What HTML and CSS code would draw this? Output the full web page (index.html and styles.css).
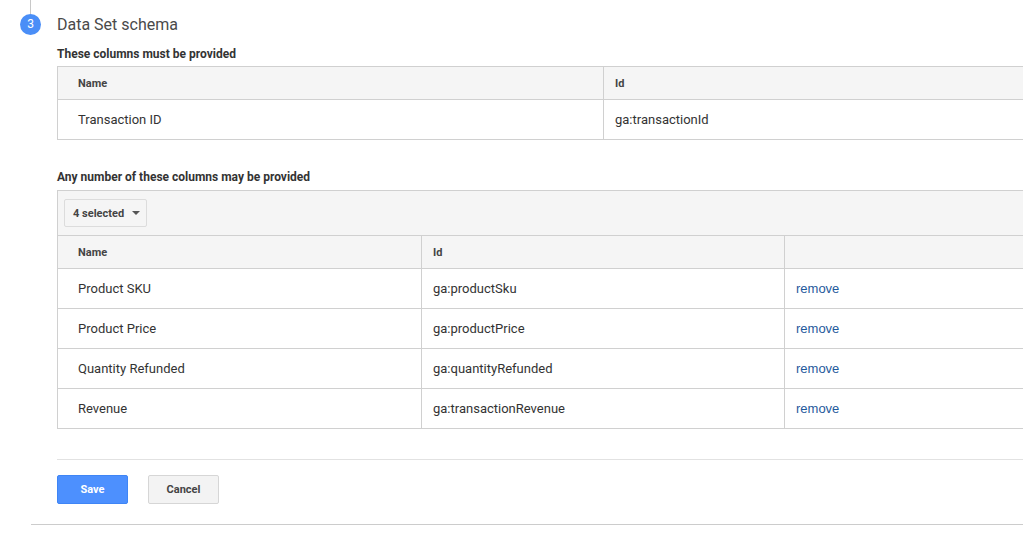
FILE: index.html
```html
<!DOCTYPE html>
<html>
<head>
<meta charset="utf-8">
<link rel="stylesheet" href="styles.css">
</head>
<body>
<div class="page">
  <div class="rail-line"></div>
  <div class="step-head">
    <span class="step-badge">3</span>
    <span class="step-title">Data Set schema</span>
  </div>
  <div class="step-body">
    <div class="label label-first">These columns must be provided</div>
    <table class="grid grid-two">
      <colgroup><col class="col-half"><col class="col-half"></colgroup>
      <thead>
        <tr class="head-row"><th>Name</th><th>Id</th></tr>
      </thead>
      <tbody>
        <tr class="data-row"><td>Transaction ID</td><td>ga:transactionId</td></tr>
      </tbody>
    </table>

    <div class="label label-second">Any number of these columns may be provided</div>
    <table class="grid grid-three">
      <colgroup><col class="col-third"><col class="col-third2"><col class="col-third"></colgroup>
      <thead>
        <tr class="tool-row">
          <th colspan="3">
            <button class="select-btn">4 selected <span class="caret"></span></button>
          </th>
        </tr>
        <tr class="head-row"><th>Name</th><th>Id</th><th></th></tr>
      </thead>
      <tbody>
        <tr class="data-row"><td>Product SKU</td><td>ga:productSku</td><td><a class="link">remove</a></td></tr>
        <tr class="data-row"><td>Product Price</td><td>ga:productPrice</td><td><a class="link">remove</a></td></tr>
        <tr class="data-row"><td>Quantity Refunded</td><td>ga:quantityRefunded</td><td><a class="link">remove</a></td></tr>
        <tr class="data-row"><td>Revenue</td><td>ga:transactionRevenue</td><td><a class="link">remove</a></td></tr>
      </tbody>
    </table>

    <div class="divider"></div>
    <div class="actions">
      <button class="btn btn-primary">Save</button>
      <button class="btn btn-default">Cancel</button>
    </div>
  </div>
  <div class="bottom-line"></div>
</div>
</body>
</html>
```

FILE: styles.css
```css
html, body {
  margin: 0;
  padding: 0;
  background: #ffffff;
  overflow: hidden;
}
body {
  width: 1023px;
  height: 539px;
  font-family: Roboto, "Liberation Sans", Arial, sans-serif;
  font-size: 13px;
  color: #333333;
}
.page {
  width: 1200px;
}
.rail-line {
  margin-left: 30px;
  width: 1px;
  height: 14px;
  background: #c8c8c8;
}
.step-head {
  display: flex;
  align-items: center;
  height: 21px;
}
.step-badge {
  margin-left: 20px;
  width: 21px;
  height: 21px;
  border-radius: 50%;
  background: #4a8ef7;
  color: #ffffff;
  font-size: 12px;
  line-height: 21px;
  text-align: center;
}
.step-title {
  margin-left: 16px;
  font-size: 16px;
  color: #4a4a4a;
}
.step-body {
  margin-left: 57px;
}
.label {
  height: 16px;
  line-height: 16px;
  font-size: 12px;
  font-weight: bold;
  color: #333333;
}
.label-first {
  margin-top: 11px;
  margin-bottom: 4px;
}
.label-second {
  margin-top: 29px;
  margin-bottom: 5px;
}
.grid {
  width: 1092px;
  border-collapse: collapse;
  table-layout: fixed;
}
.col-half {
  width: 546px;
}
.col-third {
  width: 364px;
}
.col-third2 {
  width: 363px;
}
.grid th, .grid td {
  border: 1px solid #d0d0d0;
  text-align: left;
  padding: 0 0 0 11px;
  vertical-align: middle;
}
.grid th:first-child, .grid td:first-child {
  padding-left: 20px;
}
.head-row {
  height: 33px;
}
.head-row th {
  background: #f5f5f5;
  font-size: 11px;
  font-weight: bold;
  color: #444444;
}
.data-row {
  height: 40px;
}
.data-row td {
  font-size: 13px;
  color: #333333;
}
.tool-row {
  height: 45px;
}
.grid .tool-row th {
  background: #f5f5f5;
  padding-left: 6px;
  border-bottom: 1px solid #d0d0d0;
}
.select-btn {
  display: inline-flex;
  align-items: center;
  height: 28px;
  width: 83px;
  padding: 0 0 0 8px;
  border: 1px solid #dcdcdc;
  border-radius: 2px;
  background: #f5f5f5;
  font-family: Roboto, "Liberation Sans", Arial, sans-serif;
  font-size: 11px;
  font-weight: bold;
  color: #444444;
}
.caret {
  margin-left: 8px;
  width: 0;
  height: 0;
  border-left: 4px solid transparent;
  border-right: 4px solid transparent;
  border-top: 4px solid #555555;
}
.link {
  font-family: "Liberation Sans", Arial, sans-serif;
  color: #1f5a9c;
  font-size: 13px;
  text-decoration: none;
}
.divider {
  margin-top: 30px;
  height: 1px;
  background: #e2e2e2;
}
.actions {
  display: flex;
  gap: 20px;
  margin-top: 15px;
}
.btn {
  width: 71px;
  height: 29px;
  border-radius: 2px;
  font-family: Roboto, "Liberation Sans", Arial, sans-serif;
  font-size: 11px;
  font-weight: bold;
  padding: 0;
}
.btn-primary {
  background: #4d90fe;
  border: 1px solid #3f85f5;
  color: #ffffff;
}
.btn-default {
  background: #f3f3f3;
  border: 1px solid #d6d6d6;
  color: #444444;
}
.bottom-line {
  margin-top: 20px;
  margin-left: 31px;
  height: 1px;
  background: #cccccc;
}
```
